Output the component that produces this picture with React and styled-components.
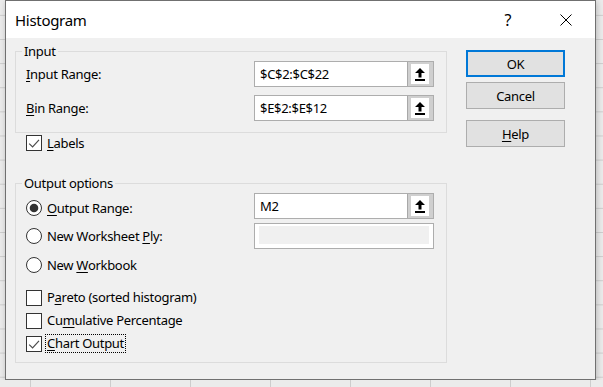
import styled, { createGlobalStyle } from "styled-components";

const GlobalStyle = createGlobalStyle`
  html, body {
    margin: 0;
    padding: 0;
  }
  body {
    background-color: #ebebeb;
    background-image:
      linear-gradient(to right, #cdcdcd 1px, transparent 1px),
      linear-gradient(to bottom, #cdcdcd 1px, transparent 1px);
    background-size: 80px 24.14px;
    background-position: 30px 14.86px;
    font-family: "Noto Sans", "Open Sans", sans-serif;
    color: #000;
    overflow: hidden;
  }
`;

const Dialog = styled.div`
  box-sizing: border-box;
  width: 591px;
  height: 380px;
  margin-left: 5px;
  border: 1px solid #707070;
  background: #f0f0f0;
  box-shadow: 1px 2px 6px rgba(0, 0, 0, 0.22);
  display: flex;
  flex-direction: column;
`;

const TitleBar = styled.div`
  height: 37px;
  flex: none;
  background: #fff;
  display: flex;
  align-items: center;
  padding-left: 9px;
`;

const Title = styled.div`
  flex: 1;
  font-size: 15px;
  letter-spacing: -0.3px;
`;

const TitleControl = styled.div`
  width: 46px;
  height: 100%;
  display: flex;
  align-items: center;
  justify-content: center;
  margin-right: ${(p) => p.$gap}px;
  font-size: 16px;
`;

const Body = styled.div`
  display: flex;
  padding: 6px 0 0 9px;
`;

const LeftColumn = styled.div`
  width: 432px;
  display: flex;
  flex-direction: column;
`;

const Group = styled.fieldset`
  margin: ${(p) => p.$top || 0}px 0 0 0;
  padding: 0;
  border: 1px solid #dcdcdc;
  min-width: 0;
`;

const Legend = styled.legend`
  margin-left: 6px;
  padding: 0 2px;
  font-size: 13px;
  letter-spacing: -0.3px;
  line-height: 14px;
`;

const GroupInner = styled.div`
  display: flex;
  flex-direction: column;
  gap: ${(p) => p.$gap}px;
  padding: 3px 12px ${(p) => p.$bottom}px 10px;
`;

const Row = styled.div`
  display: flex;
  align-items: center;
  justify-content: space-between;
  min-height: ${(p) => p.$h || 26}px;
`;

const Label = styled.span`
  font-size: 13px;
  letter-spacing: -0.3px;
  line-height: 17px;
`;

const Option = styled.label`
  display: flex;
  align-items: center;
  gap: 5px;
  padding-top: ${(p) => p.$drop || 0}px;
  font-size: 13px;
  letter-spacing: -0.3px;
  line-height: 17px;
`;

const CheckRow = styled.div`
  display: flex;
  align-items: center;
  height: ${(p) => p.$h || 23}px;
  padding-left: ${(p) => p.$indent || 0}px;
  gap: ${(p) => (p.$focus ? 3 : 5)}px;
  font-size: 13px;
  letter-spacing: -0.3px;
  line-height: 17px;
`;

const ChecksBlock = styled.div`
  margin-top: 5px;
  display: flex;
  flex-direction: column;
`;

const Box = styled.span`
  box-sizing: border-box;
  width: 16px;
  height: 16px;
  flex: none;
  border: 1px solid #333;
  background: #fff;
  display: flex;
`;

const FocusText = styled.span`
  border: 1px dotted #000;
  padding: 0 1px;
`;

const Key = styled.u`
  text-underline-offset: 2px;
  text-decoration-thickness: 1px;
`;

const Field = styled.div`
  box-sizing: border-box;
  width: 180px;
  height: 26px;
  border: 1px solid #adadad;
  background: #fff;
  display: flex;
  padding: ${(p) => (p.$disabled ? "2px 4px 4px" : "0")};
`;

const FieldText = styled.span`
  flex: 1;
  padding-left: 5px;
  font-size: 13px;
  line-height: 24px;
  letter-spacing: -0.3px;
`;

const DisabledFill = styled.div`
  flex: 1;
  background: #f0f0f0;
`;

const RefButton = styled.div`
  box-sizing: border-box;
  width: 26px;
  flex: none;
  border-left: 1px solid #a8a8a8;
  background: #cfcfcf;
  padding: 2px 4px 2px 3px;
  display: flex;
`;

const RefInner = styled.div`
  flex: 1;
  background: #fff;
  display: flex;
  align-items: center;
  justify-content: center;
`;

const RightColumn = styled.div`
  margin-left: 19px;
  padding-top: 6px;
  display: flex;
  flex-direction: column;
`;

const Button = styled.button`
  box-sizing: border-box;
  width: 99px;
  height: 27px;
  margin: ${(p) => p.$top || 0}px 0 0 0;
  padding: 0;
  background: #e1e1e1;
  border: ${(p) => (p.$primary ? "2px solid #0078d7" : "1px solid #adadad")};
  font-family: "Noto Sans", "Open Sans", sans-serif;
  font-size: 13px;
  letter-spacing: -0.3px;
  color: #000;
`;

function CheckMark() {
  return (
    <svg width="14" height="14" viewBox="0 0 14 14">
      <polyline points="2.2,7.6 5.6,11 12,3.8" fill="none" stroke="#4d4d4d" strokeWidth="1.2" />
    </svg>
  );
}

function Check({ checked }) {
  return <Box>{checked && <CheckMark />}</Box>;
}

function Radio({ checked }) {
  return (
    <svg width="16" height="16" viewBox="0 0 16 16" style={{ flex: "none" }}>
      <circle cx="8" cy="8" r="7.5" fill="#fff" stroke="#333" strokeWidth="1" />
      {checked && <circle cx="8" cy="8" r="4.3" fill="#333" />}
    </svg>
  );
}

function RefIcon() {
  return (
    <svg width="10" height="13" viewBox="0 0 10 13">
      <polygon points="5,0 10,5 6.5,5 6.5,9.5 3.5,9.5 3.5,5 0,5" fill="#000" />
      <rect x="0" y="11" width="10" height="2" fill="#000" />
    </svg>
  );
}

function RangeField({ value }) {
  return (
    <Field>
      <FieldText>{value}</FieldText>
      <RefButton>
        <RefInner>
          <RefIcon />
        </RefInner>
      </RefButton>
    </Field>
  );
}

function CloseIcon() {
  return (
    <svg width="12" height="12" viewBox="0 0 12 12">
      <path d="M0.5 0.5 L11.5 11.5 M11.5 0.5 L0.5 11.5" stroke="#000" strokeWidth="1" />
    </svg>
  );
}

export default function App() {
  return (
    <>
      <GlobalStyle />
      <Dialog>
        <TitleBar>
          <Title>Histogram</Title>
          <TitleControl $gap={12}>?</TitleControl>
          <TitleControl $gap={6}>
            <CloseIcon />
          </TitleControl>
        </TitleBar>
        <Body>
          <LeftColumn>
            <Group>
              <Legend>Input</Legend>
              <GroupInner $gap={8} $bottom={11}>
                <Row>
                  <Label>
                    <Key>I</Key>nput Range:
                  </Label>
                  <RangeField value="$C$2:$C$22" />
                </Row>
                <Row>
                  <Label>
                    <Key>B</Key>in Range:
                  </Label>
                  <RangeField value="$E$2:$E$12" />
                </Row>
              </GroupInner>
            </Group>
            <CheckRow $h={20} $indent={11}>
              <Check checked />
              <span>
                <Key>L</Key>abels
              </span>
            </CheckRow>

            <Group $top={23}>
              <Legend>Output options</Legend>
              <GroupInner $gap={4} $bottom={7}>
                <Row>
                  <Option $drop={4}>
                    <Radio checked />
                    <span>
                      <Key>O</Key>utput Range:
                    </span>
                  </Option>
                  <RangeField value="M2" />
                </Row>
                <Row>
                  <Option>
                    <Radio />
                    <span>
                      New Worksheet <Key>P</Key>ly:
                    </span>
                  </Option>
                  <Field $disabled>
                    <DisabledFill />
                  </Field>
                </Row>
                <Row $h={24}>
                  <Option>
                    <Radio />
                    <span>
                      New <Key>W</Key>orkbook
                    </span>
                  </Option>
                </Row>
                <ChecksBlock>
                  <CheckRow>
                    <Check />
                    <span>
                      P<Key>a</Key>reto (sorted histogram)
                    </span>
                  </CheckRow>
                  <CheckRow>
                    <Check />
                    <span>
                      Cu<Key>m</Key>ulative Percentage
                    </span>
                  </CheckRow>
                  <CheckRow $focus>
                    <Check checked />
                    <FocusText>
                      <Key>C</Key>hart Output
                    </FocusText>
                  </CheckRow>
                </ChecksBlock>
              </GroupInner>
            </Group>
          </LeftColumn>
          <RightColumn>
            <Button $primary>OK</Button>
            <Button $top={5}>Cancel</Button>
            <Button $top={11}>
              <Key>H</Key>elp
            </Button>
          </RightColumn>
        </Body>
      </Dialog>
    </>
  );
}
